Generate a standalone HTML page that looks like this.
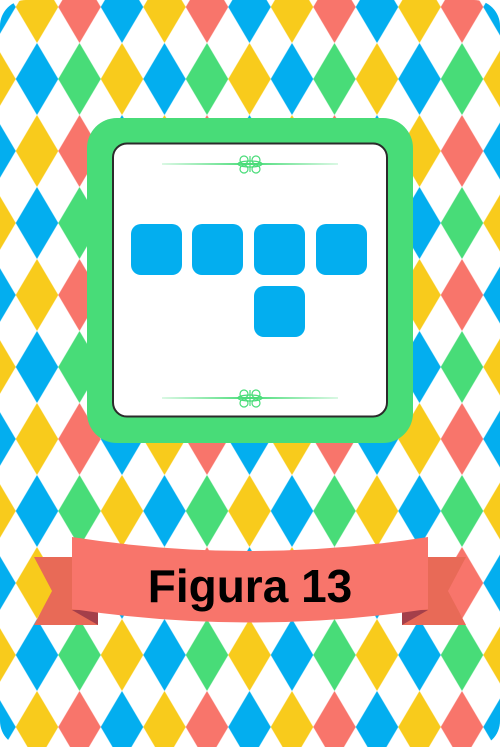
<!DOCTYPE html>
<html><head><meta charset="utf-8"><style>
html,body{margin:0;padding:0;background:#fff;width:500px;height:747px;overflow:hidden}
</style></head><body>
<svg width="500" height="747" viewBox="0 0 500 747" xmlns="http://www.w3.org/2000/svg">
<defs>
<pattern id="p" x="15.75" y="-29" width="127.5" height="144" patternUnits="userSpaceOnUse">
<polygon points="21.25,0 42.5,36 21.25,72 0,36" fill="#F8CB1C"/>
<polygon points="63.75,0 85,36 63.75,72 42.5,36" fill="#F8756B"/>
<polygon points="106.25,0 127.5,36 106.25,72 85,36" fill="#03AEEF"/>
<polygon points="21.25,72 42.5,108 21.25,144 0,108" fill="#03AEEF"/>
<polygon points="63.75,72 85,108 63.75,144 42.5,108" fill="#48DC78"/>
<polygon points="106.25,72 127.5,108 106.25,144 85,108" fill="#F8CB1C"/>
</pattern>
<clipPath id="c"><rect x="0" y="0" width="500" height="747" rx="26"/></clipPath>
<linearGradient id="lg" x1="0" x2="1"><stop offset="0" stop-color="#48DC78" stop-opacity="0.2"/><stop offset="0.5" stop-color="#48DC78"/><stop offset="1" stop-color="#48DC78" stop-opacity="0.2"/></linearGradient>
</defs>
<rect width="500" height="747" fill="url(#p)" clip-path="url(#c)"/>
<rect x="87" y="118" width="326" height="325" rx="30" fill="#48DC78"/>
<rect x="113" y="143.5" width="274" height="273" rx="14" fill="#fff" stroke="#2b2b2b" stroke-width="2"/>
<g fill="#03AEEF">
<rect x="131" y="224" width="51" height="51" rx="10"/>
<rect x="192" y="224" width="51" height="51" rx="10"/>
<rect x="254" y="224" width="51" height="51" rx="10"/>
<rect x="316" y="224" width="51" height="51" rx="10"/>
<rect x="254" y="286" width="51" height="51" rx="10"/>
</g>
<g id="orn">
<rect x="162" y="163" width="176" height="2" fill="url(#lg)"/>
<g fill="none" stroke="#48DC78" stroke-width="1.2">
<circle cx="244" cy="160" r="4"/><circle cx="256" cy="160" r="4"/>
<circle cx="244" cy="169" r="4"/><circle cx="256" cy="169" r="4"/>
<ellipse cx="250" cy="164" rx="12" ry="3"/>
<path d="M250 156 V172"/>
</g>
</g>
<use href="#orn" transform="translate(0,234)"/>
<polygon points="34,557 98,557 98,625 34,625 52,591" fill="#E86A57"/>
<polygon points="466,557 402,557 402,625 466,625 448,591" fill="#E86A57"/>
<polygon points="72,610 98,625 98,610" fill="#A43F4A"/>
<polygon points="428,610 402,625 402,610" fill="#A43F4A"/>
<path d="M72 537 Q250 565 428 537 L428 609 Q250 636 72 609 Z" fill="#F8756B"/>
<text x="250" y="602" text-anchor="middle" font-family="Liberation Sans, sans-serif" font-weight="bold" font-size="46" fill="#000">Figura 13</text>
</svg>
</body></html>
